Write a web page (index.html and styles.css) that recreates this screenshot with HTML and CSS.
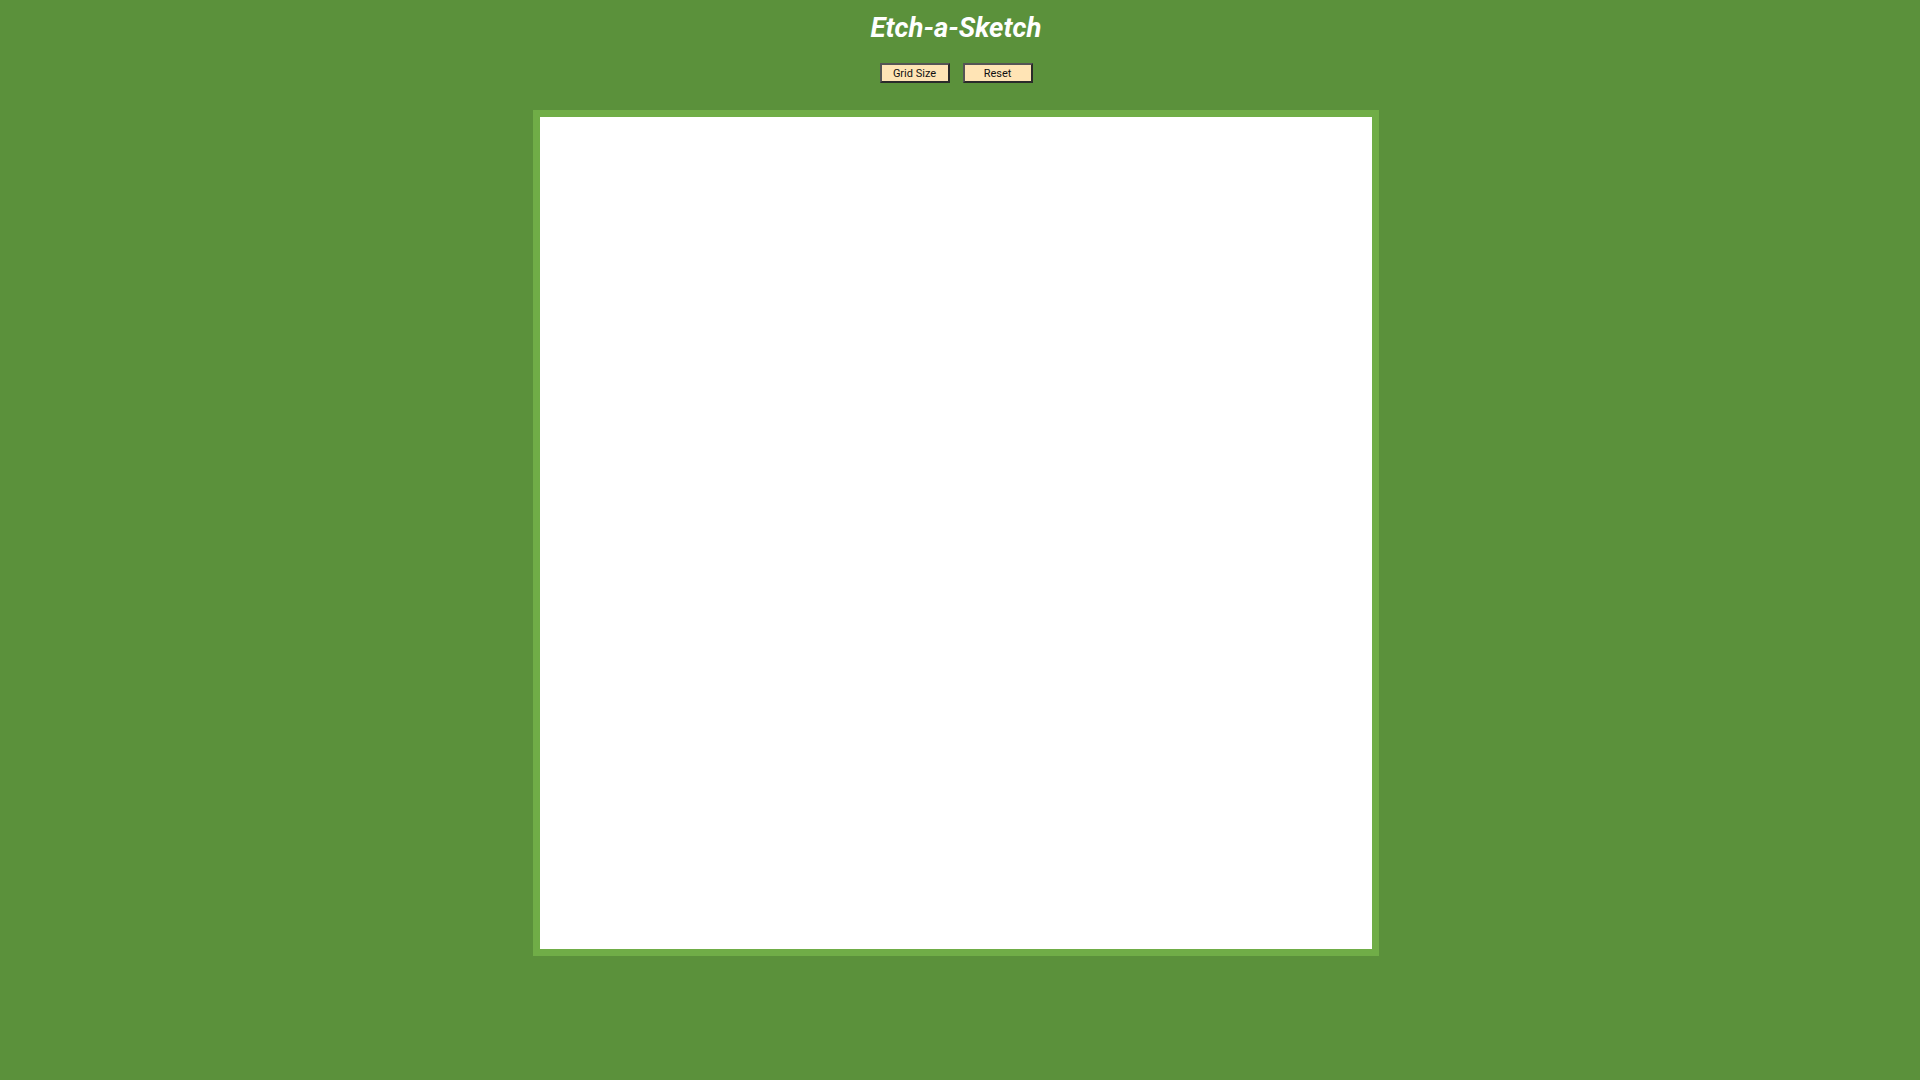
FILE: index.html
```html
<!DOCTYPE html>
<html>
<head>
<meta charset="utf-8">
<title>Etch-a-Sketch</title>
<link rel="stylesheet" href="styles.css">
</head>
<body>
<div class="page">
  <h1 class="title">Etch-a-Sketch</h1>
  <div class="controls">
    <button class="btn">Grid Size</button>
    <button class="btn">Reset</button>
  </div>
  <div class="board"></div>
</div>
</body>
</html>
```
FILE: styles.css
```css
html, body {
  margin: 0;
  padding: 0;
  background: #5b913b;
  height: 100%;
}
body {
  font-family: Roboto, "Liberation Sans", sans-serif;
}
.page {
  width: 1912px;
  display: flex;
  flex-direction: column;
  align-items: center;
}
.title {
  margin: 11px 0 0 0;
  font-size: 27.5px;
  line-height: 33px;
  font-weight: 700;
  font-style: italic;
  color: #ffffff;
}
.controls {
  margin-top: 19px;
  display: flex;
  gap: 13px;
}
.btn {
  width: 70px;
  height: 20px;
  padding: 0;
  background: #ffe4b5;
  border-width: 2px;
  border-style: solid;
  border-color: #555 #2a2a2a #2a2a2a #555;
  font-family: Roboto, "Liberation Sans", sans-serif;
  font-size: 11px;
  color: #111;
}
.board {
  margin-top: 27px;
  width: 832px;
  height: 832px;
  background: #ffffff;
  border: 7px solid #70ad47;
}
```
